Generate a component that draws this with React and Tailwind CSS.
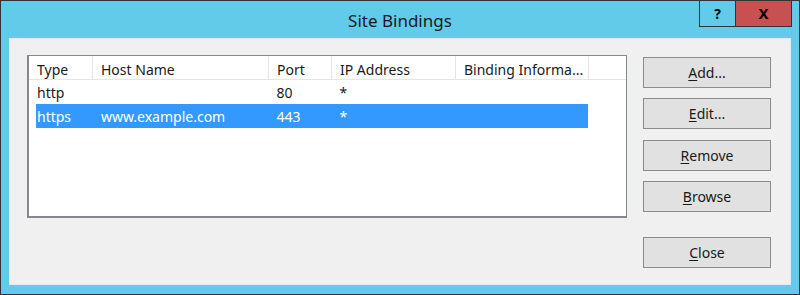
const font = { fontFamily: '"Segoe UI", "Noto Sans", "Open Sans", sans-serif' }

const columns = [
  { label: 'Type', w: 'w-[64px]' },
  { label: 'Host Name', w: 'w-[176px]' },
  { label: 'Port', w: 'w-[63px]' },
  { label: 'IP Address', w: 'w-[124px]' },
  { label: 'Binding Informa...', w: 'w-[133px]' },
]

const rows = [
  { cells: ['http', '', '80', '*', ''], selected: false },
  { cells: ['https', 'www.example.com', '443', '*', ''], selected: true },
]

function Btn({ mnemonic, rest, className = '' }) {
  return (
    <button className={`h-[31px] w-[128px] border border-[#8c8c8c] bg-[#e1e1e1] text-[14px] text-[#1a1a1a] leading-none ${className}`}>
      <span className="underline underline-offset-2">{mnemonic}</span>
      {rest}
    </button>
  )
}

export default function App() {
  return (
    <div className="w-[800px] h-[295px] border border-[#333] bg-[#63cbea] flex flex-col relative" style={font}>
      {/* title bar */}
      <div className="h-[37px] flex items-center justify-center text-[17px] text-[#1a1a1a] pt-[2px]">
        Site Bindings
      </div>
      <div className="absolute top-[-1px] right-[7px] flex h-[27px]">
        <div className="w-[36px] border border-[#333] border-r-0 bg-[#63cbea] flex items-center justify-center text-[14px] font-bold text-black">?</div>
        <div className="w-[57px] border border-[#333] bg-[#c75050] flex items-center justify-center text-[15px] font-bold text-black">X</div>
      </div>

      {/* client area */}
      <div className="mx-[8px] mb-[9px] flex-1 border border-[#dbeef6] bg-[#f0f0f0] flex pl-[17px] pt-[16px]">
        <div className="w-[600px] h-[163px] border border-[#828790] border-l-2 border-b-2 bg-white flex flex-col text-[14px] text-[#1a1a1a]">
          <div className="flex h-[24px] border-b border-[#e5e5e5]">
            {columns.map((c) => (
              <div key={c.label} className={`${c.w} border-r border-[#e5e5e5] pl-[8px] pt-[3px] flex items-center whitespace-nowrap overflow-hidden`}>
                {c.label}
              </div>
            ))}
          </div>
          {rows.map((r, i) => (
            <div
              key={i}
              className={`flex h-[24px] ml-[7px] w-[552px] ${r.selected ? 'bg-[#3399ff] text-white' : ''}`}
            >
              {r.cells.map((cell, j) => (
                <div
                  key={j}
                  className={`${j === 0 ? 'w-[57px] pl-[1px]' : columns[j].w} ${j > 0 ? 'pl-[8px]' : ''} pt-[1px] flex items-center whitespace-nowrap`}
                >
                  {cell}
                </div>
              ))}
            </div>
          ))}
        </div>

        <div className="ml-[16px] pt-[2px] flex flex-col">
          <Btn mnemonic="A" rest="dd..." />
          <Btn mnemonic="E" rest="dit..." className="mt-[10px]" />
          <Btn mnemonic="R" rest="emove" className="mt-[11px]" />
          <Btn mnemonic="B" rest="rowse" className="mt-[10px]" />
          <Btn mnemonic="C" rest="lose" className="mt-[25px]" />
        </div>
      </div>
    </div>
  )
}
